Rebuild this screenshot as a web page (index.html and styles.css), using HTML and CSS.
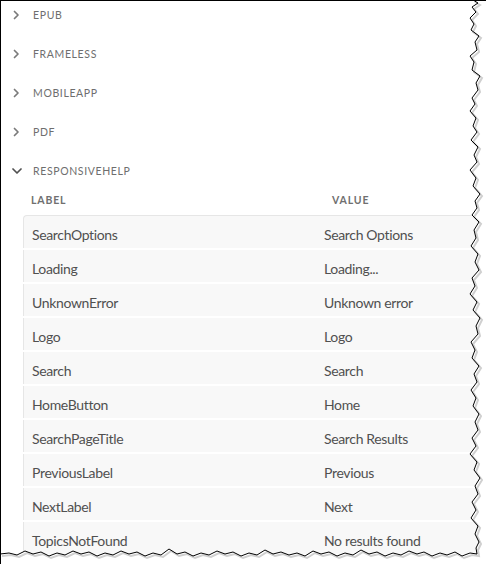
FILE: index.html
```html
<!DOCTYPE html>
<html>
<head>
<meta charset="utf-8">
<link rel="stylesheet" href="styles.css">
</head>
<body>
<div class="page">
  <ul class="sections">
    <li class="section"><svg class="chev" viewBox="0 0 10 10"><path d="M2.5 1.5 L6 5 L2.5 8.5"/></svg><span>EPUB</span></li>
    <li class="section"><svg class="chev" viewBox="0 0 10 10"><path d="M2.5 1.5 L6 5 L2.5 8.5"/></svg><span>FRAMELESS</span></li>
    <li class="section"><svg class="chev" viewBox="0 0 10 10"><path d="M2.5 1.5 L6 5 L2.5 8.5"/></svg><span>MOBILEAPP</span></li>
    <li class="section"><svg class="chev" viewBox="0 0 10 10"><path d="M2.5 1.5 L6 5 L2.5 8.5"/></svg><span>PDF</span></li>
    <li class="section open"><svg class="chev" viewBox="0 0 10 10"><path d="M1 3 L5 7 L9 3"/></svg><span>RESPONSIVEHELP</span></li>
  </ul>
  <div class="table">
    <div class="thead"><span class="hl">LABEL</span><span class="hv">VALUE</span></div>
    <div class="tbody">
      <div class="row"><span class="cl">SearchOptions</span><span class="cv">Search Options</span></div>
      <div class="row"><span class="cl">Loading</span><span class="cv">Loading...</span></div>
      <div class="row"><span class="cl">UnknownError</span><span class="cv">Unknown error</span></div>
      <div class="row"><span class="cl">Logo</span><span class="cv">Logo</span></div>
      <div class="row"><span class="cl">Search</span><span class="cv">Search</span></div>
      <div class="row"><span class="cl">HomeButton</span><span class="cv">Home</span></div>
      <div class="row"><span class="cl">SearchPageTitle</span><span class="cv">Search Results</span></div>
      <div class="row"><span class="cl">PreviousLabel</span><span class="cv">Previous</span></div>
      <div class="row"><span class="cl">NextLabel</span><span class="cv">Next</span></div>
      <div class="row"><span class="cl">TopicsNotFound</span><span class="cv">No results found</span></div>
    </div>
  </div>
  <svg class="tear" viewBox="0 0 486 564" width="486" height="564">
    <path class="tear-fill" d="M486 0 L473 0 L478 3 L472 7 L476 12 L470 18 L474 24 L471 30 L479 36 L475 42 L477 50 L470 56 L474 62 L472 70 L480 76 L476 83 L478 90 L472 98 L475 104 L470 111 L476 118 L473 126 L477 132 L471 140 L478 147 L474 155 L477 162 L470 170 L476 178 L473 186 L480 194 L475 201 L477 208 L472 215 L479 222 L474 230 L476 238 L471 246 L478 254 L475 262 L479 270 L472 278 L475 286 L470 294 L477 302 L473 310 L480 318 L476 326 L478 334 L471 342 L475 350 L472 358 L479 366 L474 374 L477 382 L471 390 L476 398 L473 406 L479 414 L475 422 L478 430 L472 438 L476 446 L470 454 L477 462 L474 470 L480 478 L475 486 L478 494 L472 502 L476 510 L471 518 L478 526 L475 534 L479 542 L476 548 L477 554 L470 553 L462 556 L455 552 L447 555 L440 553 L432 556 L424 552 L417 554 L409 551 L401 555 L393 553 L385 556 L377 552 L369 554 L361 550 L353 555 L345 553 L337 556 L329 552 L321 554 L313 551 L305 556 L297 553 L289 555 L281 552 L273 554 L265 550 L257 555 L249 553 L241 556 L233 552 L225 554 L217 551 L209 555 L201 553 L193 556 L185 552 L177 554 L169 549 L161 555 L153 553 L145 556 L137 552 L129 554 L121 551 L113 555 L105 553 L97 556 L89 552 L81 554 L73 551 L65 555 L57 553 L49 556 L41 552 L33 554 L25 551 L17 555 L9 553 L0 554 L0 564 L486 564 Z"/>
    <path class="tear-shadow" d="M473 0 L478 3 L472 7 L476 12 L470 18 L474 24 L471 30 L479 36 L475 42 L477 50 L470 56 L474 62 L472 70 L480 76 L476 83 L478 90 L472 98 L475 104 L470 111 L476 118 L473 126 L477 132 L471 140 L478 147 L474 155 L477 162 L470 170 L476 178 L473 186 L480 194 L475 201 L477 208 L472 215 L479 222 L474 230 L476 238 L471 246 L478 254 L475 262 L479 270 L472 278 L475 286 L470 294 L477 302 L473 310 L480 318 L476 326 L478 334 L471 342 L475 350 L472 358 L479 366 L474 374 L477 382 L471 390 L476 398 L473 406 L479 414 L475 422 L478 430 L472 438 L476 446 L470 454 L477 462 L474 470 L480 478 L475 486 L478 494 L472 502 L476 510 L471 518 L478 526 L475 534 L479 542 L476 548 L477 554 L470 553 L462 556 L455 552 L447 555 L440 553 L432 556 L424 552 L417 554 L409 551 L401 555 L393 553 L385 556 L377 552 L369 554 L361 550 L353 555 L345 553 L337 556 L329 552 L321 554 L313 551 L305 556 L297 553 L289 555 L281 552 L273 554 L265 550 L257 555 L249 553 L241 556 L233 552 L225 554 L217 551 L209 555 L201 553 L193 556 L185 552 L177 554 L169 549 L161 555 L153 553 L145 556 L137 552 L129 554 L121 551 L113 555 L105 553 L97 556 L89 552 L81 554 L73 551 L65 555 L57 553 L49 556 L41 552 L33 554 L25 551 L17 555 L9 553 L0 554"/>
    <path class="tear-line" d="M473 0 L478 3 L472 7 L476 12 L470 18 L474 24 L471 30 L479 36 L475 42 L477 50 L470 56 L474 62 L472 70 L480 76 L476 83 L478 90 L472 98 L475 104 L470 111 L476 118 L473 126 L477 132 L471 140 L478 147 L474 155 L477 162 L470 170 L476 178 L473 186 L480 194 L475 201 L477 208 L472 215 L479 222 L474 230 L476 238 L471 246 L478 254 L475 262 L479 270 L472 278 L475 286 L470 294 L477 302 L473 310 L480 318 L476 326 L478 334 L471 342 L475 350 L472 358 L479 366 L474 374 L477 382 L471 390 L476 398 L473 406 L479 414 L475 422 L478 430 L472 438 L476 446 L470 454 L477 462 L474 470 L480 478 L475 486 L478 494 L472 502 L476 510 L471 518 L478 526 L475 534 L479 542 L476 548 L477 554 L470 553 L462 556 L455 552 L447 555 L440 553 L432 556 L424 552 L417 554 L409 551 L401 555 L393 553 L385 556 L377 552 L369 554 L361 550 L353 555 L345 553 L337 556 L329 552 L321 554 L313 551 L305 556 L297 553 L289 555 L281 552 L273 554 L265 550 L257 555 L249 553 L241 556 L233 552 L225 554 L217 551 L209 555 L201 553 L193 556 L185 552 L177 554 L169 549 L161 555 L153 553 L145 556 L137 552 L129 554 L121 551 L113 555 L105 553 L97 556 L89 552 L81 554 L73 551 L65 555 L57 553 L49 556 L41 552 L33 554 L25 551 L17 555 L9 553 L0 554"/>
  </svg>
</div>
</body>
</html>
```

FILE: styles.css
```css
* { box-sizing: border-box; }
html, body { margin: 0; padding: 0; background: #fff; }
body { font-family: Lato, "Open Sans", sans-serif; }

.page {
  position: relative;
  width: 486px;
  height: 564px;
  overflow: hidden;
  border-top: 1px solid #000;
  border-left: 1px solid #000;
  background: #fff;
}

.sections { list-style: none; margin: 0; padding: 0; }
.section {
  display: flex;
  align-items: center;
  height: 28px;
  margin-bottom: 11px;
  padding-left: 11px;
  gap: 11px;
  font-size: 10.5px;
  font-weight: 400;
  letter-spacing: 0.06em;
  color: #6e6e6e;
}
.section.open { margin-bottom: 0; }
.chev { width: 10px; height: 10px; flex: none; }
.chev path { fill: none; stroke: #7a7a7a; stroke-width: 1.7; stroke-linecap: round; stroke-linejoin: round; }
.section.open .chev path { stroke: #505050; }

.table { margin-left: 22px; }
.thead {
  display: grid;
  grid-template-columns: 293px 1fr;
  height: 30px;
  align-items: center;
  font-size: 10.5px;
  font-weight: 700;
  letter-spacing: 0.08em;
  color: #707070;
}
.hl { padding-left: 8px; }
.hv { padding-left: 16px; }

.tbody { width: 470px; }
.row {
  display: grid;
  grid-template-columns: 293px 1fr;
  align-items: center;
  height: 32px;
  padding-top: 4px;
  margin-bottom: 2px;
  background: #f8f8f8;
  border-left: 1px solid #e6e6e6;
  font-size: 14px;
  letter-spacing: -0.35px;
  color: #505050;
}
.row:first-child {
  height: 33px;
  border-top: 1px solid #e6e6e6;
  border-top-left-radius: 4px;
  padding-top: 5px;
}
.cl { padding-left: 8px; }
.cv { padding-left: 7px; white-space: nowrap; }

.tear { position: absolute; left: -1px; top: -1px; }
.tear-fill { fill: #fff; }
.tear-shadow { fill: none; stroke: #d0d0d0; stroke-width: 2; transform: translate(2px, 2px); }
.tear-line { fill: none; stroke: #000; stroke-width: 1; }
```
